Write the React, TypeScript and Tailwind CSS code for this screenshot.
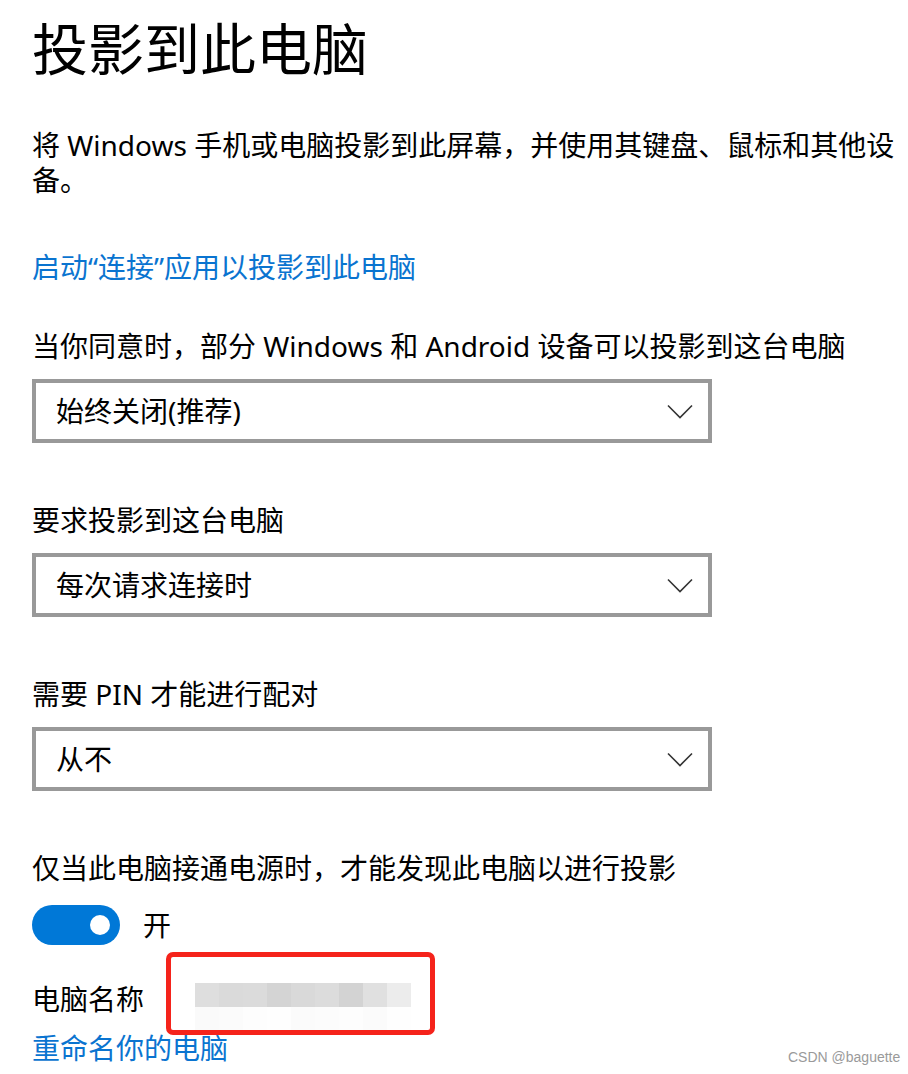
import React from "react";

const font = { fontFamily: '"Noto Sans", "Noto Sans CJK SC", sans-serif' };

function Chevron() {
  return (
    <svg width="26" height="15" viewBox="0 0 26 15" fill="none">
      <path d="M1 1.5 L13 13.5 L25 1.5" stroke="#333" strokeWidth="1.6" />
    </svg>
  );
}

function Dropdown({ value }: { value: string }) {
  return (
    <div className="mt-[15px] flex h-[64px] w-[680px] items-center justify-between border-4 border-[#999999] bg-white pl-[20px] pr-[15px]">
      <span className="text-[28px] leading-[35px] text-black">{value}</span>
      <Chevron />
    </div>
  );
}

export default function App() {
  const blocks = ["#dedede", "#dadada", "#dbdbdb", "#d4d4d4", "#d9d9d9", "#dcdcdc", "#d3d3d3", "#e0e0e0", "#ececec"];
  const blocks2 = ["#fafafa", "#fbfbfb", "#fdfdfd", "#fefefe", "#fbfbfb", "#fcfcfc", "#fdfdfd", "#fbfbfb", "#fefefe"];
  return (
    <div className="relative h-[1074px] w-[908px] overflow-hidden bg-white pl-8 pr-1 text-black" style={font}>
      <h1 className="pt-4 text-[56px] font-normal leading-[64px]">投影到此电脑</h1>
      <p className="mt-[48px] text-[28px] leading-[35px]">
        将 Windows 手机或电脑投影到此屏幕，并使用其键盘、鼠标和其他设备。
      </p>
      <div className="mt-[52px] text-[28px] leading-[35px] text-[#0a74d0]">启动“连接”应用以投影到此电脑</div>

      <div className="mt-[44px] text-[28px] leading-[35px]">当你同意时，部分 Windows 和 Android 设备可以投影到这台电脑</div>
      <Dropdown value="始终关闭(推荐)" />

      <div className="mt-[60px] text-[28px] leading-[35px]">要求投影到这台电脑</div>
      <Dropdown value="每次请求连接时" />

      <div className="mt-[60px] text-[28px] leading-[35px]">需要 PIN 才能进行配对</div>
      <Dropdown value="从不" />

      <div className="mt-[60px] text-[28px] leading-[35px]">仅当此电脑接通电源时，才能发现此电脑以进行投影</div>
      <div className="mt-[19px] flex items-center">
        <div className="flex h-[40px] w-[88px] items-center justify-end rounded-full bg-[#0078d7] pr-[10px]">
          <div className="h-[20px] w-[20px] rounded-full bg-white" />
        </div>
        <span className="ml-[23px] text-[28px] leading-[35px]">开</span>
      </div>

      <div className="mt-[37px] flex h-[35px] items-start">
        <span className="w-[163px] text-[28px] leading-[35px]">电脑名称</span>
        <div className="mt-[1px] flex flex-col">
          <div className="flex">
            {blocks.map((c, i) => (
              <div key={i} className="h-[24px] w-[24px]" style={{ backgroundColor: c }} />
            ))}
          </div>
          <div className="flex">
            {blocks2.map((c, i) => (
              <div key={i} className="h-[23px] w-[24px]" style={{ backgroundColor: c }} />
            ))}
          </div>
        </div>
      </div>
      <div className="mt-[14px] text-[28px] leading-[35px] text-[#0a74d0]">重命名你的电脑</div>

      <div className="pointer-events-none absolute left-[166px] top-[952px] h-[83px] w-[269px] rounded-[7px] border-[5px] border-[#f5231b]" />

      <div
        className="absolute left-[788px] top-[1049px] text-[14px] leading-[16px] text-[#9a9a9a]"
        style={{ fontFamily: '"Liberation Sans", sans-serif' }}
      >
        CSDN @baguette
      </div>
    </div>
  );
}
